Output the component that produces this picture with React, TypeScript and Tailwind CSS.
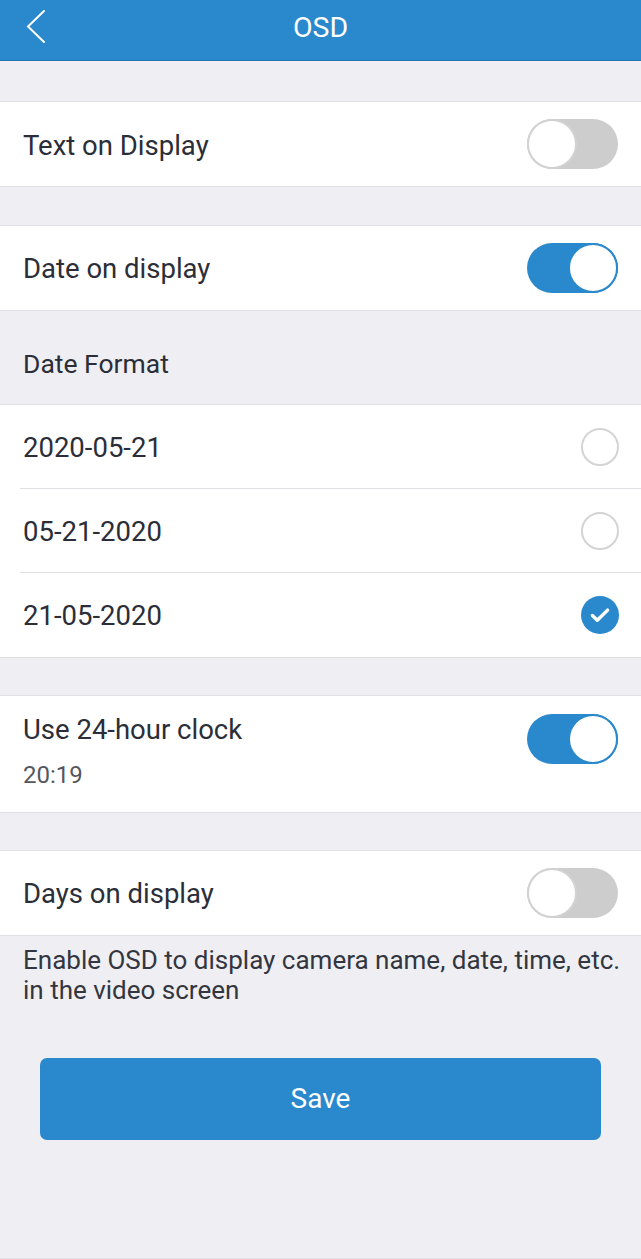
import React, { useState } from "react";

const Toggle = ({ on, onClick }: { on: boolean; onClick: () => void }) => (
  <button
    onClick={onClick}
    className={`relative w-[91px] h-[50px] rounded-full shrink-0 ${
      on ? "bg-[#2a88cc]" : "bg-[#cdcdcd]"
    }`}
  >
    <span
      className={`absolute top-0 w-[50px] h-[50px] rounded-full bg-white border-2 ${
        on ? "right-0 border-[#2a88cc]" : "left-0 border-[#d2d2d2]"
      }`}
    />
  </button>
);

const Radio = ({ checked }: { checked: boolean }) =>
  checked ? (
    <span className="w-[38px] h-[38px] rounded-full bg-[#2a88cc] flex items-center justify-center">
      <svg width="26" height="26" viewBox="0 0 24 24" fill="none">
        <path
          d="M5 12.5l4.5 4.3L19 7.5"
          stroke="white"
          strokeWidth="3.2"
          strokeLinecap="round"
          strokeLinejoin="round"
        />
      </svg>
    </span>
  ) : (
    <span className="w-[38px] h-[38px] rounded-full border-2 border-[#d4d4d4] bg-white" />
  );

export default function App() {
  const [textOn, setTextOn] = useState(false);
  const [dateOn, setDateOn] = useState(true);
  const [clock24, setClock24] = useState(true);
  const [daysOn, setDaysOn] = useState(false);
  const [format, setFormat] = useState(2);

  const formats = ["2020-05-21", "05-21-2020", "21-05-2020"];

  return (
    <div
      className="w-[641px] h-[1259px] bg-[#efeef3] text-[#2b2e38] flex flex-col border-b border-[#e2e1e8]"
      style={{ fontFamily: "Roboto, 'Noto Sans', sans-serif" }}
    >
      {/* Header */}
      <div className="h-[61px] bg-[#2a88cc] border-b border-[#2275b3] relative flex items-center justify-center shrink-0">
        <button className="absolute left-[24px] top-[9px]">
          <svg width="24" height="36" viewBox="0 0 24 36" fill="none">
            <path d="M20 2L4 17.5 20 33" stroke="white" strokeWidth="2" strokeLinecap="round" />
          </svg>
        </button>
        <span className="text-white text-[28.5px] -mt-[4px]">OSD</span>
      </div>

      <div className="h-[40px]" />

      {/* Text on Display */}
      <div className="bg-white border-y border-[#e0e0e4] h-[86px] flex items-center justify-between pl-[23px] pr-[23px]">
        <span className="text-[27.5px] mt-[4px]">Text on Display</span>
        <Toggle on={textOn} onClick={() => setTextOn(!textOn)} />
      </div>

      <div className="h-[38px]" />

      {/* Date on display */}
      <div className="bg-white border-y border-[#e0e0e4] h-[86px] flex items-center justify-between pl-[23px] pr-[23px]">
        <span className="text-[27.5px] mt-[2px]">Date on display</span>
        <Toggle on={dateOn} onClick={() => setDateOn(!dateOn)} />
      </div>

      {/* Date Format */}
      <div className="h-[93px] flex items-center pl-[23px] pt-[12px] text-[26.5px]">Date Format</div>

      <div className="bg-white border-y border-[#e0e0e4]">
        {formats.map((f, i) => (
          <button
            key={f}
            onClick={() => setFormat(i)}
            className="w-full h-[84px] flex items-center justify-between pl-[23px] pr-[22px] relative"
          >
            <span className="text-[27.5px] mt-[2px]">{f}</span>
            <Radio checked={format === i} />
            {i < formats.length - 1 && (
              <span className="absolute left-[20px] right-0 bottom-0 h-px bg-[#e0e0e4]" />
            )}
          </button>
        ))}
      </div>

      <div className="h-[37px]" />

      {/* 24-hour clock */}
      <div className="bg-white border-y border-[#e0e0e4] h-[118px] flex items-center justify-between pl-[23px] pr-[23px]">
        <div className="flex flex-col gap-[17px] -mt-[6px]">
          <span className="text-[27.5px] leading-[30px]">Use 24-hour clock</span>
          <span className="text-[24px] leading-[26px] text-[#55575e]">20:19</span>
        </div>
        <div className="-mt-[24px]">
          <Toggle on={clock24} onClick={() => setClock24(!clock24)} />
        </div>
      </div>

      <div className="h-[37px]" />

      {/* Days on display */}
      <div className="bg-white border-y border-[#e0e0e4] h-[86px] flex items-center justify-between pl-[23px] pr-[23px]">
        <span className="text-[27.5px] mt-[2px]">Days on display</span>
        <Toggle on={daysOn} onClick={() => setDaysOn(!daysOn)} />
      </div>

      <p className="px-[23px] pr-[10px] pt-[9px] text-[26px] leading-[30px] text-[#33363f]">
        Enable OSD to display camera name, date, time, etc. in the video screen
      </p>

      <div className="px-[40px] mt-[53px]">
        <button className="w-full h-[82px] rounded-[7px] bg-[#2a88cc] text-white text-[28px]">
          Save
        </button>
      </div>
    </div>
  );
}
